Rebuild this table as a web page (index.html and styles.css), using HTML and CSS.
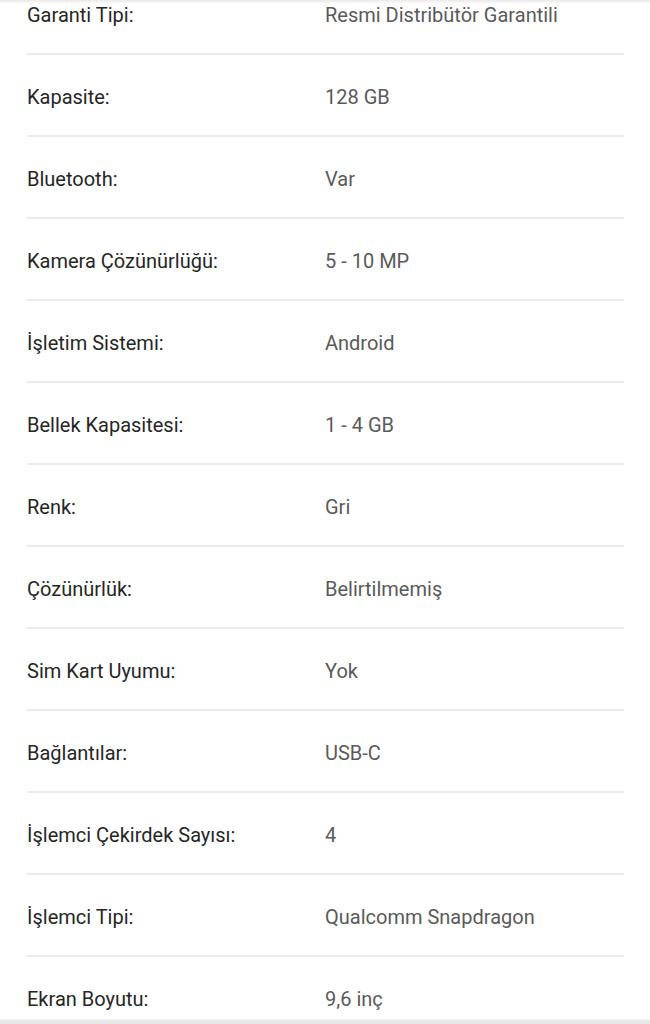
FILE: index.html
```html
<!DOCTYPE html>
<html lang="tr">
<head>
    <meta charset="utf-8">
    <title>Ürün Özellikleri</title>
    <link rel="stylesheet" href="styles.css">
</head>
<body>
    <div class="top-shadow"></div>
    <div class="specs">
        <div class="row"><span class="label">Garanti Tipi:</span><span class="value">Resmi Distribütör Garantili</span></div>
        <div class="row"><span class="label">Kapasite:</span><span class="value">128 GB</span></div>
        <div class="row"><span class="label">Bluetooth:</span><span class="value">Var</span></div>
        <div class="row"><span class="label">Kamera Çözünürlüğü:</span><span class="value">5 - 10 MP</span></div>
        <div class="row"><span class="label">İşletim Sistemi:</span><span class="value">Android</span></div>
        <div class="row"><span class="label">Bellek Kapasitesi:</span><span class="value">1 - 4 GB</span></div>
        <div class="row"><span class="label">Renk:</span><span class="value">Gri</span></div>
        <div class="row"><span class="label">Çözünürlük:</span><span class="value">Belirtilmemiş</span></div>
        <div class="row"><span class="label">Sim Kart Uyumu:</span><span class="value">Yok</span></div>
        <div class="row"><span class="label">Bağlantılar:</span><span class="value">USB-C</span></div>
        <div class="row"><span class="label">İşlemci Çekirdek Sayısı:</span><span class="value">4</span></div>
        <div class="row"><span class="label">İşlemci Tipi:</span><span class="value">Qualcomm Snapdragon</span></div>
        <div class="row"><span class="label">Ekran Boyutu:</span><span class="value">9,6 inç</span></div>
    </div>
    <div class="bottom-bar"></div>
</body>
</html>
```

FILE: styles.css
```css
html, body {
    margin: 0;
    height: 1024px;
    overflow: hidden;
    background: #fff;
}
body {
    font-family: Roboto, "Noto Sans", sans-serif;
    font-size: 20px;
    position: relative;
}
.top-shadow {
    position: absolute;
    top: 0;
    left: 0;
    right: 0;
    height: 4px;
    background: linear-gradient(#ece8ea, rgba(255, 255, 255, 0));
    z-index: 2;
}
.specs {
    margin: -27px 26px 0 27px;
}
.row {
    display: grid;
    grid-template-columns: 298px 1fr;
    line-height: 24px;
    padding: 30px 0 26px;
    border-bottom: 2px solid #ebebeb;
}
.label {
    color: #262626;
}
.value {
    color: #5a5a5a;
}
.bottom-bar {
    position: absolute;
    left: 0;
    right: 0;
    bottom: 0;
    height: 4px;
    background: #e8e8e8;
    border-top: 1px solid #f2f2f2;
}
```
